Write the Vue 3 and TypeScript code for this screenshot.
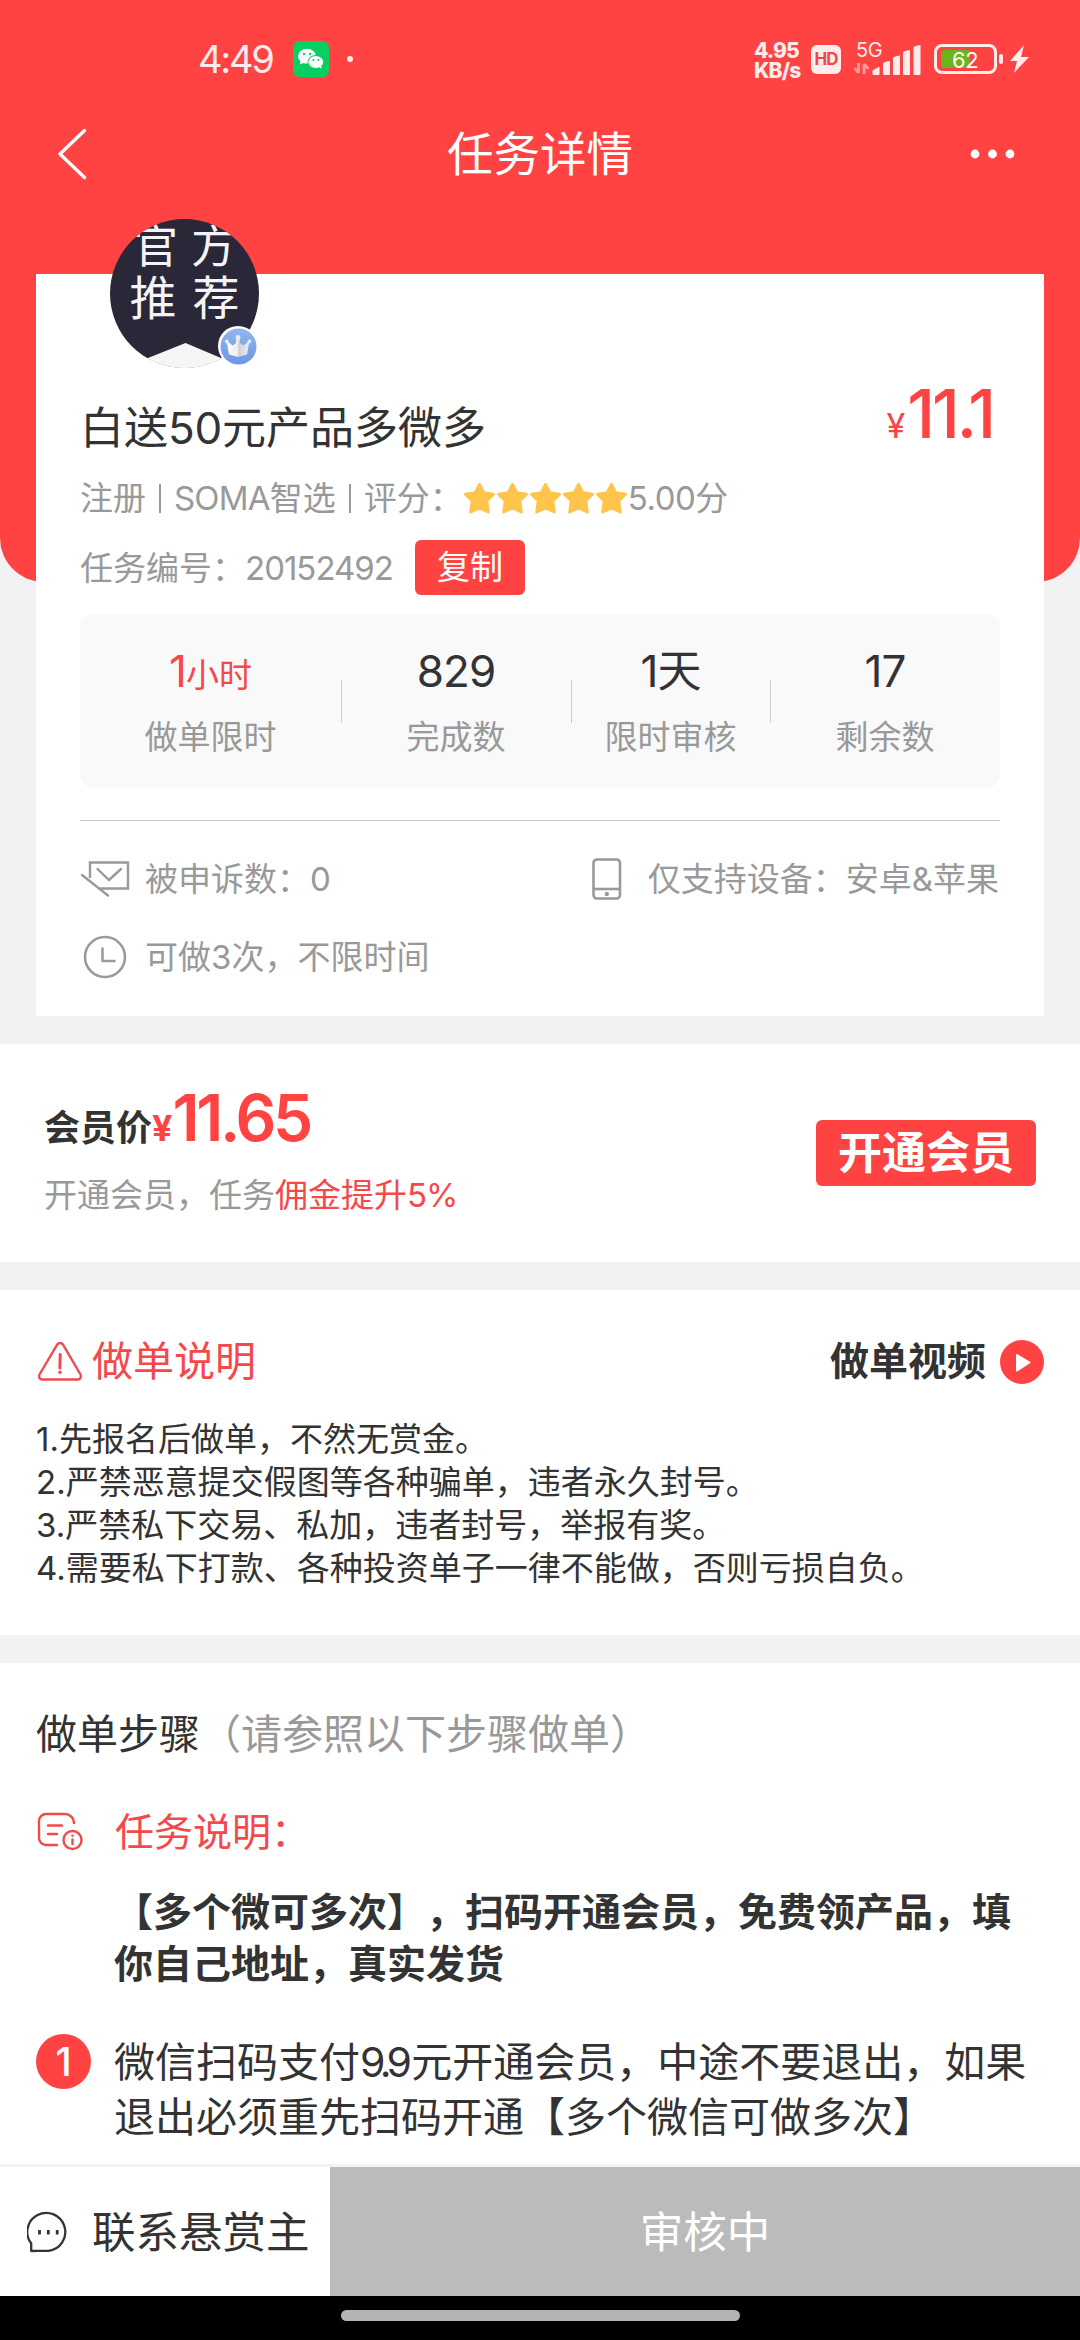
<script setup lang="ts">
interface Stat {
  value: string
  unit?: string
  label: string
  hot?: boolean
}

const stats: Stat[] = [
  { value: '1', unit: '小时', label: '做单限时', hot: true },
  { value: '829', label: '完成数' },
  { value: '1天', label: '限时审核' },
  { value: '17', label: '剩余数' },
]

const rules: string[] = [
  '1.先报名后做单，不然无赏金。',
  '2.严禁恶意提交假图等各种骗单，违者永久封号。',
  '3.严禁私下交易、私加，违者封号，举报有奖。',
  '4.需要私下打款、各种投资单子一律不能做，否则亏损自负。',
]
</script>

<template>
  <div class="page">
    <main class="content">
      <div class="hero">
        <div class="status">
          <div class="status-left">
            <span class="clock">4:49</span>
            <svg class="wechat" viewBox="0 0 36 36" width="36" height="36">
              <rect width="36" height="36" rx="6.5" fill="#07cf62" />
              <ellipse cx="14" cy="15.2" rx="9" ry="7.4" fill="#fff" />
              <path d="M7.5 19l-.6 4.4 4.4-2z" fill="#fff" />
              <ellipse cx="22.8" cy="21" rx="8.3" ry="6.9" fill="#07cf62" />
              <ellipse cx="22.8" cy="21" rx="7.4" ry="6.1" fill="#fff" />
              <path d="M25 25.6l3.6 2.2-.6-4z" fill="#fff" />
              <circle cx="11" cy="13" r="1.2" fill="#07cf62" />
              <circle cx="17" cy="13" r="1.2" fill="#07cf62" />
              <circle cx="20.3" cy="19" r="1" fill="#07cf62" />
              <circle cx="25.3" cy="19" r="1" fill="#07cf62" />
            </svg>
            <i class="dot"></i>
          </div>
          <div class="status-right">
            <div class="net"><span>4.95</span><span>KB/s</span></div>
            <div class="hd">HD</div>
            <div class="signal">
              <span class="g5">5G</span>
              <svg viewBox="0 0 68 34" width="68" height="34">
                <g fill="none" stroke="#ff9c9b" stroke-width="2.8">
                  <path d="M5.500 22v10M1.500 27l4 5M11 33V23M11 23l4.500 5" />
                </g>
                <g fill="#ffeceb">
                  <path d="M19.500 29.500l7-4V33a1 1 0 0 1-1 1h-5a1 1 0 0 1-1-1z" />
                  <path d="M30 22.500q0-1.500 7-2.500V33a1 1 0 0 1-1 1h-5a1 1 0 0 1-1-1z" />
                  <path d="M40 17q0-1.500 7-2.500V33a1 1 0 0 1-1 1h-5a1 1 0 0 1-1-1z" />
                  <path d="M50 11.500q0-1.500 7-2.500V33a1 1 0 0 1-1 1h-5a1 1 0 0 1-1-1z" />
                  <path d="M60.500 6.500q0-1.500 7-2.500V33a1 1 0 0 1-1 1h-5a1 1 0 0 1-1-1z" />
                </g>
              </svg>
            </div>
            <div class="battery">
              <svg viewBox="0 0 96 30" width="96" height="30">
                <rect x="1.500" y="1.500" width="60" height="27" rx="6.500" fill="none" stroke="#ffeceb" stroke-width="3" />
                <path d="M10 6h26v18H10a3 3 0 0 1-3-3V9a3 3 0 0 1 3-3z" fill="#6ab41c" />
                <rect x="65" y="10" width="4" height="10" rx="2" fill="#ffeceb" />
                <path d="M90 1L76 17h7l-3 12 15-16h-8z" fill="#ffeceb" />
              </svg>
              <span>62</span>
            </div>
          </div>
        </div>

        <header class="nav">
          <svg viewBox="0 0 30 52" width="30" height="52">
            <path d="M27.500 2.500L3 26l24.500 23.500" fill="none" stroke="#fff" stroke-width="3.400" stroke-linecap="round" stroke-linejoin="round" />
          </svg>
          <h1>任务详情</h1>
          <svg class="more" viewBox="0 0 46 10" width="46" height="10">
            <g fill="#fff"><circle cx="5" cy="5" r="4.400" /><circle cx="22.500" cy="5" r="4.400" /><circle cx="40" cy="5" r="4.400" /></g>
          </svg>
        </header>

        <section class="card">
          <div class="avatar">
            <div class="avatar-face">
              <svg viewBox="0 0 149 149" width="149" height="149">
                <rect width="149" height="149" fill="#292738" />
                <path d="M38 139L75.500 124L111 139V149H38z" fill="#f5f5f5" />
                <path d="M0 139h149V149H0z" fill="#f5f5f5" />
              </svg>
              <div class="avatar-text">
                <span class="upper left">官</span><span class="upper right">方</span><span>推</span><span>荐</span>
              </div>
            </div>
            <svg class="badge" viewBox="0 0 40 40" width="40" height="40">
              <defs>
                <linearGradient id="crown" x1="0" x2="1">
                  <stop offset="0" stop-color="#fdfcf8" />
                  <stop offset=".5" stop-color="#f1eeea" />
                  <stop offset=".5" stop-color="#cfd0d4" />
                  <stop offset="1" stop-color="#e9edf4" />
                </linearGradient>
                <linearGradient id="disc" x1="0" y1="0" x2="0" y2="1">
                  <stop offset="0" stop-color="#93b6ef" />
                  <stop offset="1" stop-color="#6c97e2" />
                </linearGradient>
              </defs>
              <circle cx="20" cy="20" r="20" fill="#fff" />
              <circle cx="20.500" cy="20.500" r="18" fill="url(#disc)" />
              <path d="M8.500 14.500l6 5L18 17v-6h4v6l3.500 2.500 6-5-2.500 14-9 2.500-9-2.500z" fill="url(#crown)" />
              <circle cx="20" cy="11.500" r="2.400" fill="#e4eaf6" />
              <circle cx="8.800" cy="15.500" r="1.900" fill="#e4eaf6" />
              <circle cx="31.500" cy="15.500" r="1.900" fill="#e4eaf6" />
            </svg>
          </div>

          <div class="title-row">
            <h2>白送<span class="n50">50</span>元产品多微多</h2>
            <div class="price"><small>¥</small><b>11.1</b></div>
          </div>
          <div class="meta">
            <span>注册</span><i class="bar"></i><span class="soma">SOMA</span><span>智选</span><i class="bar"></i><span>评分：</span>
            <span class="stars">
              <svg v-for="n in 5" :key="n" viewBox="0 0 33 33" width="33" height="33">
                <path d="M16.500 2.500l4.200 8.200 9.800 1.500-6.800 6.600 1.600 11.200-8.800-4.200-8.800 4.200 1.600-11.200-6.800-6.600 9.800-1.500z" fill="#ffc44c" stroke="#ffc44c" stroke-width="3" stroke-linejoin="round" />
              </svg>
            </span>
            <span class="score">5.00</span><span>分</span>
          </div>
          <div class="meta number">
            <span>任务编号：</span><span class="id">20152492</span><button class="copy">复制</button>
          </div>

          <div class="stats">
            <div v-for="s in stats" :key="s.label" class="stat">
              <div class="stat-value" :class="{ hot: s.hot }">{{ s.value }}<small v-if="s.unit">{{ s.unit }}</small></div>
              <div class="stat-label">{{ s.label }}</div>
            </div>
          </div>

          <div class="facts">
            <div class="fact">
              <svg viewBox="0 0 50 42" width="50" height="42">
                <g fill="none" stroke="#999" stroke-width="2.400">
                  <path d="M10 20V4.500h38v26H20" />
                  <path d="M17.500 11l11.500 11L41 11" stroke-linecap="round" />
                  <path d="M2 17l26 20.500" stroke-linecap="round" />
                </g>
              </svg>
              <span>被申诉数：0</span>
            </div>
            <div class="fact device">
              <svg class="phone" viewBox="0 0 30 42" width="30" height="42">
                <g fill="none" stroke="#999" stroke-width="2.600">
                  <rect x="1.500" y="1.500" width="26.500" height="39" rx="3.500" />
                  <path d="M1.500 31h26.500" />
                </g>
                <circle cx="14.800" cy="36" r="2.200" fill="#999" />
              </svg>
              <span>仅支持设备：安卓&amp;苹果</span>
            </div>
          </div>
          <div class="facts second">
            <div class="fact">
              <svg viewBox="0 0 50 44" width="50" height="44">
                <g fill="none" stroke="#999" stroke-width="2.500">
                  <circle cx="25" cy="22" r="20" />
                  <path d="M22.500 13.500v12.500h12" stroke-linecap="round" stroke-linejoin="round" />
                </g>
              </svg>
              <span>可做3次，不限时间</span>
            </div>
          </div>
        </section>
      </div>

      <section class="member">
        <div>
          <div class="member-price"><span>会员价</span><i>¥</i><b>11.65</b></div>
          <p>开通会员，任务<em>佣金提升<span class="pct">5%</span></em></p>
        </div>
        <button class="join">开通会员</button>
      </section>

      <section class="notice">
        <div class="notice-head">
          <svg viewBox="0 0 46 42" width="46" height="42">
            <path d="M20.300 4.500a3.400 3.400 0 0 1 5.600 0L43.500 34.500a3.300 3.300 0 0 1-2.800 5H5.300a3.300 3.300 0 0 1-2.800-5z" fill="none" stroke="#f14a4c" stroke-width="2.400" />
            <path d="M23.200 14.500l-.3 13.500" stroke="#f14a4c" stroke-width="3" stroke-linecap="round" />
            <circle cx="23" cy="32.300" r="1.700" fill="#f14a4c" />
          </svg>
          <h3>做单说明</h3>
          <strong>做单视频</strong>
          <svg class="play" viewBox="0 0 44 44" width="44" height="44">
            <circle cx="22" cy="22" r="22" fill="#ff4343" />
            <path d="M17 15l12.500 7.500L17 30.500z" fill="#fff" stroke="#fff" stroke-width="2" stroke-linejoin="round" />
          </svg>
        </div>
        <ol>
          <li v-for="r in rules" :key="r">{{ r }}</li>
        </ol>
      </section>

      <section class="steps">
        <h3>做单步骤<span>（请参照以下步骤做单）</span></h3>
        <div class="explain">
          <svg viewBox="0 0 46 40" width="46" height="40">
            <g fill="none" stroke="#f14a4c" stroke-width="2.400" stroke-linecap="round">
              <path d="M20 33H9a7 7 0 0 1-7-7V9a7 7 0 0 1 7-7h19a9 9 0 0 1 9 9" />
              <path d="M11 13.500h14M11 22h9" />
              <circle cx="35.500" cy="28" r="9" />
              <path d="M35.500 27.500v4.500" />
            </g>
            <circle cx="35.500" cy="23.800" r="1.200" fill="#f14a4c" />
          </svg>
          <span>任务说明：</span>
        </div>
        <p class="desc">【多个微可多次】，扫码开通会员，免费领产品，填你自己地址，真实发货</p>
        <div class="step">
          <div class="step-no">1</div>
          <p>微信扫码支付<span class="n99">9.9</span>元开通会员，中途不要退出，如果退出必须重先扫码开通【多个微信可做多次】</p>
        </div>
      </section>
    </main>

    <footer class="bottom">
      <div class="contact">
        <svg viewBox="0 0 42 42" width="42" height="42">
          <path d="M4.200 41V33.500A19 19 0 1 1 21.500 40.800c-4 0-12 .1-17.300.2z" transform="translate(0 -1)" fill="none" stroke="#333" stroke-width="2.300" stroke-linejoin="round" />
          <path d="M12.500 19v4.600M21.300 19v4.600M30.200 19v4.600" stroke="#333" stroke-width="2.800" />
        </svg>
        <span>联系悬赏主</span>
      </div>
      <button class="review">审核中</button>
    </footer>
    <div class="gesture"><i></i></div>
  </div>
</template>

<style>
body {
  margin: 0;
  background: #f2f2f4;
}
</style>

<style scoped>
.page {
  width: 1080px;
  height: 2340px;
  display: flex;
  flex-direction: column;
  overflow: hidden;
  background: #f2f2f4;
  color: #333;
  font-family: Inter, "Noto Sans CJK SC", sans-serif;
  text-spacing-trim: space-all;
}
h1, h2, h3, p, ol {
  margin: 0;
  padding: 0;
  font-weight: 400;
}
em, i {
  font-style: normal;
}
button {
  border: 0;
  padding: 0;
  font-family: inherit;
  color: #fff;
  background: #ff4343;
}
svg {
  display: block;
  flex: none;
}
.content {
  flex: 1;
  min-height: 0;
  overflow: hidden;
}

/* red header */
.hero {
  position: relative;
  height: 1044px;
  box-sizing: border-box;
}
.hero::before {
  content: "";
  position: absolute;
  inset: 0 0 auto;
  height: 582px;
  border-radius: 0 0 44px 44px;
  background: #ff4343;
}
.status {
  position: relative;
  height: 118px;
  display: flex;
  justify-content: space-between;
  padding: 0 50px 0 198px;
}
.status-left,
.status-right {
  display: flex;
  align-items: center;
  color: #ffeceb;
}
.clock {
  width: 95px;
  font-size: 38px;
  letter-spacing: -2.300px;
}
.dot {
  width: 6px;
  height: 6px;
  margin-left: 18px;
  border-radius: 50%;
  background: #ffeceb;
}
.net {
  width: 57px;
  display: flex;
  flex-direction: column;
  padding-top: 4px;
  font-size: 21px;
  line-height: 20px;
  font-weight: 800;
  letter-spacing: -.9px;
}
.hd {
  width: 30px;
  height: 29px;
  border-radius: 6px;
  background: #ffeceb;
  color: #f0484a;
  font-size: 17px;
  line-height: 29px;
  font-weight: 700;
  text-align: center;
  letter-spacing: -1px;
}
.signal {
  position: relative;
  margin-left: 12px;
}
.signal svg {
  margin-top: -3px;
}
.g5 {
  position: absolute;
  left: 3px;
  top: -6px;
  font-size: 20px;
  line-height: 24px;
  letter-spacing: -.5px;
}
.battery {
  position: relative;
  margin-left: 13px;
}
.battery span {
  position: absolute;
  left: 18px;
  top: 4px;
  font-size: 22px;
  line-height: 24px;
  letter-spacing: -.5px;
  color: #fff;
}
.nav {
  position: relative;
  height: 71px;
  display: grid;
  grid-template-columns: 1fr auto 1fr;
  align-items: center;
  padding: 0 64px 0 57px;
}
.nav h1 {
  padding: 2px 0 0 7px;
  color: #fff;
  font-size: 46.500px;
  line-height: 69px;
}
.nav .more {
  justify-self: end;
}

/* task card */
.card {
  position: relative;
  width: 1008px;
  height: 742px;
  margin: 85px auto 0;
  box-sizing: border-box;
  padding: 0 44px;
  background: #fff;
}
.avatar {
  position: relative;
  width: 149px;
  height: 149px;
  margin: 0 0 0 30px;
  top: -55px;
}
.avatar-face {
  position: relative;
  height: 149px;
  border-radius: 50%;
  overflow: hidden;
}
.avatar-text {
  position: absolute;
  inset: 2px 18px auto 18px;
  display: grid;
  grid-template-columns: 50px 50px;
  column-gap: 13px;
  font-size: 47px;
  line-height: 51px;
  color: #f3f3f8;
  text-align: center;
}
.avatar-text .upper {
  font-size: 45px;
}
.avatar-text .left {
  padding-left: 5px;
}
.avatar-text .right {
  padding-right: 7px;
}
.badge {
  position: absolute;
  left: 108px;
  top: 107px;
}
.title-row {
  display: flex;
  justify-content: space-between;
  height: 76px;
  margin-top: -33px;
}
.title-row h2 {
  font-size: 44px;
  line-height: 76px;
}
.n50 {
  letter-spacing: -.3px;
}
.price {
  display: flex;
  align-items: baseline;
  color: #ff4343;
  line-height: 60px;
  margin: -6px 7px 0 0;
}
.price small {
  margin-right: 2px;
  font-size: 34px;
}
.price b {
  font-size: 67px;
  font-weight: 500;
  letter-spacing: -3px;
}
.meta {
  display: flex;
  align-items: center;
  height: 58px;
  margin-top: 3px;
  color: #999;
  font-size: 33px;
  line-height: 58px;
  white-space: nowrap;
}
.meta .bar {
  width: 2px;
  height: 29px;
  margin: 0 13px;
  background: #999;
}
.soma {
  letter-spacing: -.8px;
}
.stars {
  display: flex;
  margin-left: 0;
}
.score {
  letter-spacing: -.5px;
}
.id {
  letter-spacing: -1px;
}
.number {
  height: 75px;
  margin-top: 3px;
}
.copy {
  width: 110px;
  height: 55px;
  margin-left: 22px;
  border-radius: 6px;
  font-size: 33px;
  line-height: 55px;
}
.stats {
  display: grid;
  grid-template-columns: 261px 230px 199px 230px;
  height: 174px;
  margin-top: 9px;
  border-radius: 14px;
  background: #f9f9f9;
}
.stat {
  position: relative;
  text-align: center;
}
.stat + .stat::before {
  content: "";
  position: absolute;
  left: 0;
  top: 66px;
  width: 1px;
  height: 43px;
  background: #ccc;
}
.stat-value {
  margin-top: 24px;
  height: 67px;
  font-size: 44px;
  line-height: 66px;
  letter-spacing: -1px;
}
.stat-value small {
  font-size: 33px;
  letter-spacing: 0;
}
.stat-value.hot {
  color: #f5484a;
}
.stat-label {
  font-size: 33px;
  line-height: 64px;
  color: #999;
}
.facts {
  display: flex;
  justify-content: space-between;
  margin-top: 32px;
  padding-top: 29px;
  border-top: 1px solid #ccc;
}
.facts.second {
  margin-top: 0;
  padding-top: 20px;
  border: 0;
}
.fact {
  display: flex;
  align-items: center;
  height: 58px;
  font-size: 33px;
  color: #999;
  line-height: 58px;
}
.fact svg {
  margin-right: 15px;
}
.fact.device {
  margin-right: 1px;
}
.fact .phone {
  margin-right: 26px;
}

/* membership offer */
.member {
  display: flex;
  align-items: flex-start;
  justify-content: space-between;
  height: 218px;
  box-sizing: border-box;
  padding: 0 44px;
  background: #fff;
}
.member-price {
  display: flex;
  align-items: baseline;
  height: 122px;
  line-height: 148px;
  font-size: 36px;
  font-weight: 700;
}
.member-price i,
.member-price b {
  color: #ff4343;
}
.member-price b {
  font-size: 64px;
  font-weight: 600;
  letter-spacing: -3.300px;
}
.member p {
  font-size: 33px;
  line-height: 58px;
  color: #999;
}
.member em {
  color: #f5484a;
}
.pct {
  letter-spacing: -1px;
}
.join {
  width: 220px;
  height: 66px;
  margin: 76px 0 0;
  border-radius: 6px;
  font-size: 44px;
  line-height: 64px;
  font-weight: 700;
}

/* rules */
.notice {
  height: 345px;
  margin-top: 28px;
  box-sizing: border-box;
  padding: 39px 36px 0;
  background: #fff;
}
.notice-head {
  display: flex;
  align-items: center;
  height: 64px;
  line-height: 64px;
}
.notice-head svg {
  margin-left: 1px;
}
.notice-head .play {
  margin: 2px 0 0;
}
.notice-head h3 {
  flex: 1;
  margin-left: 9px;
  font-size: 41px;
  color: #f5484a;
}
.notice-head strong {
  margin-right: 14px;
  font-size: 39px;
}
.notice ol {
  list-style: none;
  margin-top: 25px;
  font-size: 33px;
  line-height: 43px;
  white-space: nowrap;
}

/* steps */
.steps {
  height: 520px;
  margin-top: 28px;
  padding: 0 36px;
  background: #fff;
}
.steps h3 {
  padding-top: 40px;
  font-size: 41px;
  line-height: 62px;
}
.steps h3 span {
  color: #999;
}
.explain {
  display: flex;
  align-items: center;
  gap: 32px;
  margin-top: 38px;
  height: 58px;
  padding-left: 1px;
  font-size: 39px;
  line-height: 58px;
  color: #f5484a;
}
.desc {
  margin: 25px 0 0 78px;
  font-size: 39px;
  line-height: 52px;
  font-weight: 700;
}
.step {
  display: flex;
  margin-top: 44px;
}
.step-no {
  flex: none;
  width: 55px;
  height: 55px;
  border-radius: 50%;
  background: #ff4343;
  color: #fff;
  font-size: 39px;
  line-height: 55px;
  font-weight: 500;
  text-align: center;
}
.step p {
  margin: 1px -10px 0 23px;
  font-size: 41px;
  line-height: 55px;
}
.n99 {
  margin-right: 4px;
  letter-spacing: -4.700px;
}

/* bottom bar */
.bottom {
  flex: none;
  display: flex;
  height: 129px;
  border-top: 3px solid #f2f2f2;
  background: #fff;
}
.contact {
  width: 330px;
  display: flex;
  align-items: center;
  box-sizing: border-box;
  padding-left: 27px;
  gap: 23px;
  font-size: 43.500px;
  line-height: 128px;
  white-space: nowrap;
}
.review {
  flex: 1;
  background: #bbb;
  font-size: 43.500px;
  line-height: 128px;
}
.gesture {
  flex: none;
  height: 44px;
  display: flex;
  justify-content: center;
  background: #000;
}
.gesture i {
  width: 399px;
  height: 11px;
  margin-top: 14px;
  border-radius: 6px;
  background: #b3b3b3;
}
</style>
